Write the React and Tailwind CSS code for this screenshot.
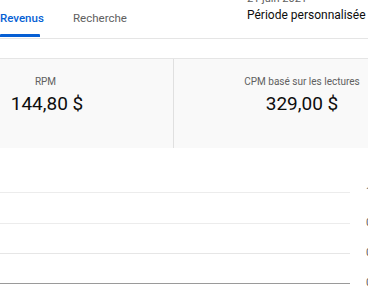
export default function App() {
  const rows = [
    { y: "1,00 $", h: "h-[31px]", cls: "border-[#ececec]" },
    { y: "0,75 $", h: "h-[30px]", cls: "border-[#ececec]" },
    { y: "0,50 $", h: "h-[30px]", cls: "border-[#e6e6e6]" },
    { y: "0,00 $", h: "h-[20px]", cls: "border-[#9a9a9a]" },
  ];
  return (
    <div
      className="w-[368px] h-[302px] overflow-hidden bg-white relative"
      style={{ fontFamily: "Roboto, 'Liberation Sans', sans-serif" }}
    >
      {/* header */}
      <div className="flex items-start h-[39px] border-b border-[#e5e5e5]">
        <div className="flex h-full">
          <div className="relative h-full w-[40px] flex items-center">
            <span className="text-[11.5px] font-medium text-[#065fd4] leading-none whitespace-nowrap">Revenus</span>
            <div className="absolute left-0 right-0 bottom-[1px] h-[3px] bg-[#065fd4] rounded-t-[1px]" />
          </div>
          <div className="h-full flex items-center ml-[33px]">
            <span className="text-[11.5px] text-[#606060] leading-none whitespace-nowrap">Recherche</span>
          </div>
        </div>
        <div className="ml-auto w-[121px] shrink-0 flex flex-col -mt-[8px] whitespace-nowrap">
          <span className="text-[11px] leading-[14px] text-[#606060]">21 juin 2021</span>
          <span className="text-[12px] leading-[18px] text-[#0d0d0d]">Période personnalisée</span>
        </div>
      </div>
      <div className="h-[19px]" />
      {/* metrics panel */}
      <div className="flex h-[90px] border-t border-[#e5e5e5] bg-[#f9f9f9] ml-[-82px]">
        <div className="w-[256px] shrink-0 border-r border-[#e0e0e0] flex flex-col items-center pt-[16px]">
          <span className="text-[10px] leading-[14px] text-[#606060]">RPM</span>
          <span className="text-[19px] leading-[26px] text-[#0d0d0d] mt-[2px] ml-[3px]">144,80 $</span>
        </div>
        <div className="w-[256px] shrink-0 flex flex-col items-center pt-[16px]">
          <span className="text-[10px] leading-[14px] text-[#606060]">CPM basé sur les lectures</span>
          <span className="text-[19px] leading-[26px] text-[#0d0d0d] mt-[2px]">329,00 $</span>
        </div>
      </div>
      {/* chart */}
      <div className="flex flex-col mt-[44px]">
        {rows.map((r, i) => (
          <div key={i} className={`flex items-start ${r.h}`}>
            <div className={`w-[350px] shrink-0 border-t ${r.cls}`} />
            <span className="ml-[16px] -mt-[7px] text-[11px] leading-[14px] text-[#606060] whitespace-nowrap">{r.y}</span>
          </div>
        ))}
      </div>
    </div>
  );
}
